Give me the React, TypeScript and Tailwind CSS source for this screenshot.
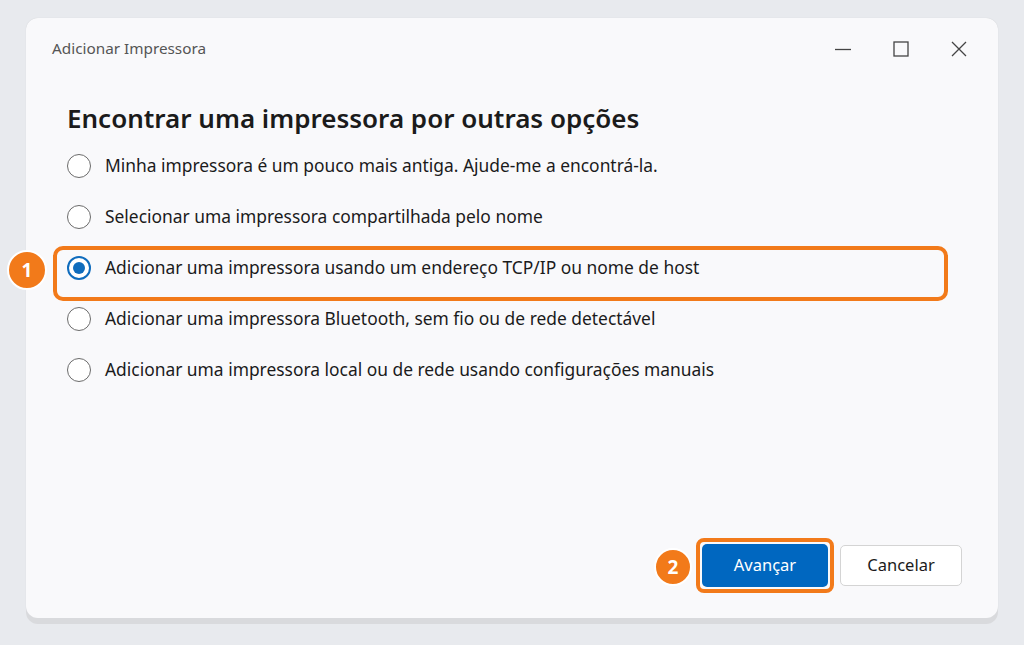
import React from "react";

const options = [
  "Minha impressora é um pouco mais antiga. Ajude-me a encontrá-la.",
  "Selecionar uma impressora compartilhada pelo nome",
  "Adicionar uma impressora usando um endereço TCP/IP ou nome de host",
  "Adicionar uma impressora Bluetooth, sem fio ou de rede detectável",
  "Adicionar uma impressora local ou de rede usando configurações manuais",
];

function Radio({ checked }: { checked: boolean }) {
  return checked ? (
    <span className="flex h-[24px] w-[24px] shrink-0 items-center justify-center rounded-full border-[2px] border-[#0f6cbd] bg-white">
      <span className="h-[12px] w-[12px] rounded-full bg-[#0f6cbd]" />
    </span>
  ) : (
    <span className="h-[24px] w-[24px] shrink-0 rounded-full border-[1.5px] border-[#6b6b6b] bg-white" />
  );
}

function Badge({ n, size }: { n: string; size: string }) {
  return (
    <span
      className={
        "flex items-center justify-center rounded-full border-[2px] border-white bg-[#f27a1a] text-[19px] font-bold text-white " +
        size
      }
    >
      {n}
    </span>
  );
}

export default function App() {
  return (
    <div
      className="h-[645px] w-[1024px] overflow-hidden bg-[#e8eaee] pl-[26px] pt-[18px]"
      style={{ fontFamily: '"Noto Sans", "Open Sans", sans-serif' }}
    >
      <div className="relative flex h-[600px] w-[972px] flex-col rounded-[12px] bg-[#f9f9fb] shadow-[0_6px_0_#d9dadd,0_0_1px_rgba(0,0,0,0.15)]">
        {/* title bar */}
        <div className="flex h-[58px] items-center pl-[26px] pt-[3px]">
          <span className="text-[15.3px] text-[#555555]">Adicionar Impressora</span>
          <div className="ml-auto flex items-center">
            <span className="flex h-[40px] w-[58px] items-center justify-center">
              <svg width="16" height="16" viewBox="0 0 16 16">
                <path d="M0 8.5h16" stroke="#444" strokeWidth="1.3" />
              </svg>
            </span>
            <span className="flex h-[40px] w-[58px] items-center justify-center">
              <svg width="16" height="16" viewBox="0 0 16 16">
                <rect x="1" y="1" width="14" height="14" fill="none" stroke="#444" strokeWidth="1.3" />
              </svg>
            </span>
            <span className="mr-[10px] flex h-[40px] w-[58px] items-center justify-center">
              <svg width="16" height="16" viewBox="0 0 16 16">
                <path d="M1 1L15 15M15 1L1 15" stroke="#444" strokeWidth="1.3" />
              </svg>
            </span>
          </div>
        </div>

        {/* heading */}
        <h1 className="mt-[25px] pl-[41px] text-[26px] font-semibold leading-[34px] text-[#1b1b1b]">
          Encontrar uma impressora por outras opções
        </h1>

        {/* options */}
        <div className="mt-[5px] flex flex-col pl-[27px]">
          {options.map((o, i) => {
            const sel = i === 2;
            return (
              <div key={i} className="relative flex h-[51px] w-[895px] items-center gap-[14px] pl-[14px]">
                <Radio checked={sel} />
                <span className="text-[17.4px] text-[#1b1b1b]">{o}</span>
                {sel && (
                  <>
                    <span className="pointer-events-none absolute left-0 top-[4px] h-[55px] w-[895px] rounded-[10px] border-[4px] border-[#f27a1a]" />
                    <span className="absolute left-[-46px] top-[8px]">
                      <Badge n="1" size="h-[40px] w-[40px]" />
                    </span>
                  </>
                )}
              </div>
            );
          })}
        </div>

        {/* buttons */}
        <div className="mt-auto mb-[25px] flex items-center justify-end gap-[6px] pr-[36px]">
          <div className="relative rounded-[8px] border-[4px] border-[#f27a1a] p-[2px]">
            <button className="h-[43px] w-[126px] rounded-[5px] bg-[#0067c0] text-[16.5px] text-white">
              Avançar
            </button>
            <span className="absolute left-[-46px] top-[6px]">
              <Badge n="2" size="h-[38px] w-[38px]" />
            </span>
          </div>
          <button className="h-[41px] w-[122px] rounded-[5px] border border-[#d4d4d4] bg-white text-[16.5px] text-[#1b1b1b]">
            Cancelar
          </button>
        </div>
      </div>
    </div>
  );
}
